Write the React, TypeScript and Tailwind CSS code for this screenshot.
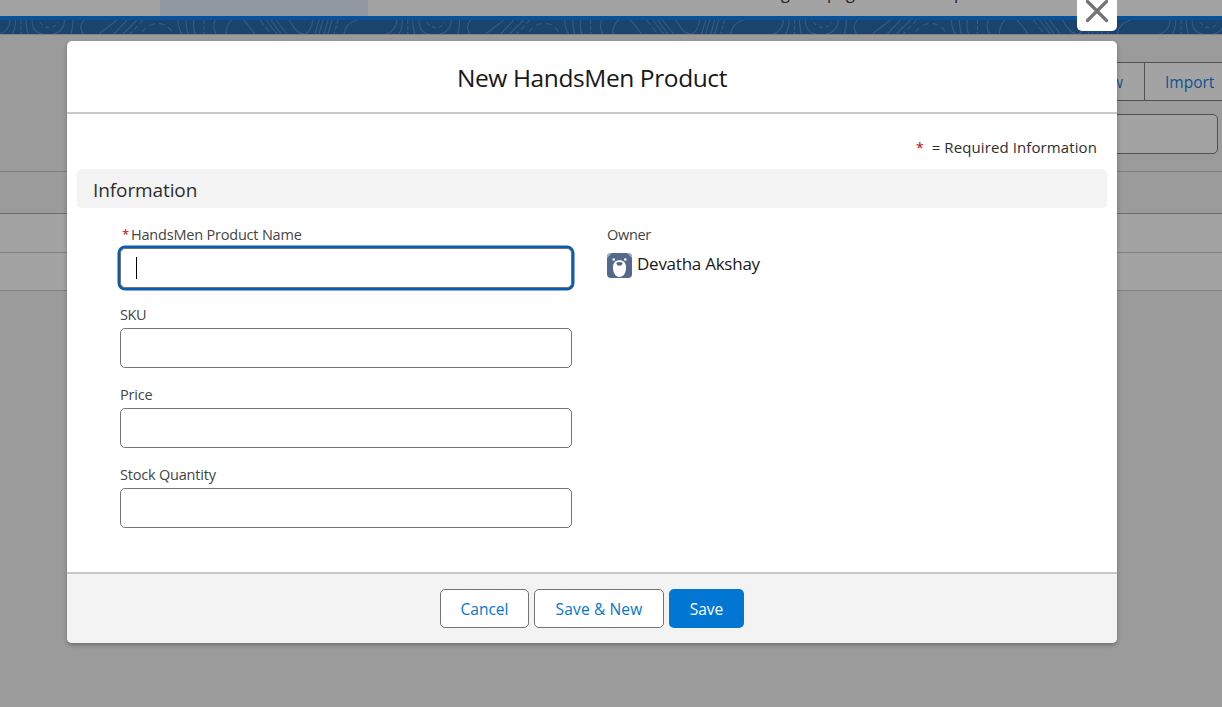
import React from "react";

const TILE = 386.7;

function TopoTile({ x }: { x: number }) {
  return (
    <g transform={`translate(${x} 0)`}>
      <path d="M10 0C10 7 5 13 -1 14M15.500 0C16 6 14 11 12 14M26 0C26 5 27 10 28 14M32 0C32 9 37 14 43 14M65 0C64 8 60 13 53 14M73 0C73 6 72 11 71 14M84 0C80 4 80 9 83 14" />
      <path d="M21 0V14" strokeDasharray="4 2" />
      <path d="M40 2C45 9 54 10 58 2" strokeDasharray="4 3" />
      <path d="M117 0C111 5 105 9 99 14M127 0L114 14M137 0L123 14" />
      <path d="M143 0L130 14" strokeDasharray="5 3" />
      <path d="M142 12C150 1 166 -1 173 14" strokeDasharray="6 4" />
      <path d="M178 0C178 6 180 11 182 14M186 0C186 6 187 11 188 14M194 0C193 6 194 11 195 14M215 0C213 6 214 11 216 14M232 0C227 4 226 9 226 14" />
      <path d="M204 0V14" strokeDasharray="4 2" />
      <path d="M243 0C248 3 251 10 255 14M266 0L277 14M271 0L281 14M276 0L287 14M289 0C294 8 298 14 304 14C309 14 312 6 313 0" />
      <path d="M260 0L271 14" strokeDasharray="6 3" />
      <path d="M319 0L315 14M323 0L319 14M328 0L324 14M332 0L328 14M357 0C349 2 345 8 344 14" />
      <path d="M338 0L334 14" strokeDasharray="4 2" />
    </g>
  );
}

function BrandBand() {
  return (
    <svg className="block h-[14px] w-full bg-[#1b446c]" fill="none" stroke="#335a80" strokeWidth="1.200">
      {[0, 1, 2, 3].map((i) => (
        <TopoTile key={i} x={i * TILE} />
      ))}
    </svg>
  );
}

function PageBehind() {
  return (
    <div className="flex h-full flex-col bg-[#9b9b9b]">
      <div className="flex h-4 shrink-0 bg-[#a3a3a3] pl-40">
        <div className="w-52 bg-[#9299a2]" />
        <div className="flex h-4 items-end overflow-hidden pl-[413px] text-[16.25px] leading-none text-[#222]">
          <span className="-mt-5 w-[46px] -translate-y-[15px]">g</span>
          <span className="w-[127px] -translate-y-[15px]">page</span>
          <span className="-translate-y-[15px]">p</span>
        </div>
      </div>
      <div className="h-1 shrink-0 bg-[#07529a]" />
      <BrandBand />
      <div className="h-px shrink-0 bg-[#828282]" />
      <div className="flex h-[136px] shrink-0 flex-col items-end pt-[27px]">
        <div className="flex h-[39px] w-[150px] border-y border-[#505050] bg-[#a3a3a3] text-[15.5px] text-[#0b5394]">
          <div className="flex w-[73px] items-center justify-end border-r border-[#505050] pt-[3px] pr-[21px]">New</div>
          <div className="flex flex-1 items-center pt-[3px] pl-5">Import</div>
        </div>
        <div className="mt-[13px] mr-1 h-10 w-60 rounded-[5px] border border-[#505050] bg-[#a3a3a3]" />
      </div>
      <div className="h-[43px] shrink-0 border-t border-b border-t-[#808080] border-b-[#6b6b6b]" />
      <div className="h-[39px] shrink-0 border-b border-[#808080] bg-[#a3a3a3]" />
      <div className="h-[38px] shrink-0 border-b border-[#808080] bg-[#a3a3a3]" />
    </div>
  );
}

function Field({ label, tracking, required, focused }: { label: string; tracking: string; required?: boolean; focused?: boolean }) {
  return (
    <div className="flex h-20 flex-col">
      <div className="flex h-[25px] items-center pb-[2px] text-[14.5px] whitespace-nowrap text-[#444]">
        {required && <span className="mr-[3px] ml-[2px] w-[6px] text-[13px] text-[#ba0517]">*</span>}
        <span className={tracking}>{label}</span>
      </div>
      <div
        className={
          focused
            ? "flex h-10 items-center rounded-[5px] border border-[#747474] bg-white pl-[15px] shadow-[0_0_0_2.5px_#0b5cab]"
            : "flex h-10 items-center rounded-[5px] border border-[#747474] bg-white pl-[15px]"
        }
      >
        {focused && <span className="h-[22px] w-px bg-black" />}
      </div>
    </div>
  );
}

function BearAvatar() {
  return (
    <svg className="h-[25px] w-[25px]" viewBox="0 0 25 25">
      <rect width="25" height="25" rx="4" fill="#54698d" />
      <path d="M0 4a4 4 0 0 1 4-4h1L0 5zM25 4a4 4 0 0 0-4-4h-1l5 5z" fill="#aab4c6" />
      <circle cx="6.700" cy="6.500" r="1.300" fill="#fff" />
      <circle cx="18.300" cy="6.500" r="1.300" fill="#fff" />
      <path d="M12.500 7.200C8.500 7.200 6 9.500 6 14.500C6 20 8.500 24 12.500 24S19 20 19 14.500C19 9.500 16.500 7.200 12.500 7.200Z" fill="#fff" />
      <path d="M9.500 9.500C11 8.700 14 8.700 15.500 9.500C16 11 14.500 12.800 12.500 12.800S9 11 9.500 9.500Z" fill="#54698d" />
    </svg>
  );
}

function Modal() {
  return (
    <div className="flex h-[602px] w-[1050px] flex-col overflow-hidden rounded-[5px] bg-white shadow-[0_2px_4px_rgba(0,0,0,0.3)]">
      <header className="flex h-[73px] shrink-0 items-center justify-center border-b-2 border-[#c9c9c9] pt-1">
        <h2 className="text-[24.5px] tracking-[-0.4px] text-[#181818]">New HandsMen Product</h2>
      </header>
      <main className="flex flex-1 flex-col px-[10px]">
        <div className="flex h-[55px] items-center justify-end pt-[11px] pr-[10px] text-[15px] tracking-[0.1px] text-[#2e2e2e]">
          <span className="mr-2 text-[14px] text-[#ba0517]">*</span>
          <span>= Required Information</span>
        </div>
        <div className="flex h-[39px] items-center rounded-[5px] bg-[#f3f3f3] pt-[3px] pl-4 text-[19px] tracking-[-0.1px] text-[#2e2e2e]">
          Information
        </div>
        <div className="flex gap-[35px] pt-[15px] pl-[43px]">
          <div className="w-[452px]">
            <Field label="HandsMen Product Name" tracking="tracking-[-0.2px]" required focused />
            <Field label="SKU" tracking="tracking-[-0.4px]" />
            <Field label="Price" tracking="tracking-[-0.2px]" />
            <Field label="Stock Quantity" tracking="tracking-[-0.2px]" />
          </div>
          <div>
            <div className="flex h-[25px] items-center pb-[2px] text-[14.5px] tracking-[-0.3px] text-[#444]">Owner</div>
            <div className="flex items-center gap-[5px] pt-[5px]">
              <BearAvatar />
              <span className="-mt-[4px] text-[17px] leading-6 tracking-[-0.25px] text-[#181818]">Devatha Akshay</span>
            </div>
          </div>
        </div>
      </main>
      <footer className="flex h-[71px] shrink-0 items-start justify-center gap-[5px] border-t-2 border-[#c9c9c9] bg-[#f3f3f3] pt-[15px] text-[15.5px]">
        <button className="h-[39px] w-[89px] rounded-[5px] border border-[#747474] bg-white pt-[3px] text-[#0176d3]">Cancel</button>
        <button className="h-[39px] w-[130px] rounded-[5px] border border-[#747474] bg-white pt-[3px] tracking-[0.15px] text-[#0176d3]">Save &amp; New</button>
        <button className="h-[39px] w-[75px] rounded-[5px] bg-[#0176d3] pt-[3px] text-white">Save</button>
      </footer>
    </div>
  );
}

export default function App() {
  return (
    <div className="relative h-[707px] w-[1222px] overflow-hidden font-['Open_Sans','Noto_Sans',sans-serif]">
      <PageBehind />
      <div className="absolute inset-0 flex flex-col pl-[67px]">
        <div className="flex h-[41px] w-[1050px] shrink-0 items-start justify-end">
          <button className="flex h-[31px] w-10 items-start justify-center rounded-b-[5px] bg-white">
            <svg className="h-[31px] w-10" viewBox="0 0 40 31" fill="none" stroke="#747474" strokeWidth="3.200" strokeLinecap="round">
              <path d="M10.500 1.500L29.500 20.500M29.500 1.500L10.500 20.500" />
            </svg>
          </button>
        </div>
        <Modal />
      </div>
    </div>
  );
}
